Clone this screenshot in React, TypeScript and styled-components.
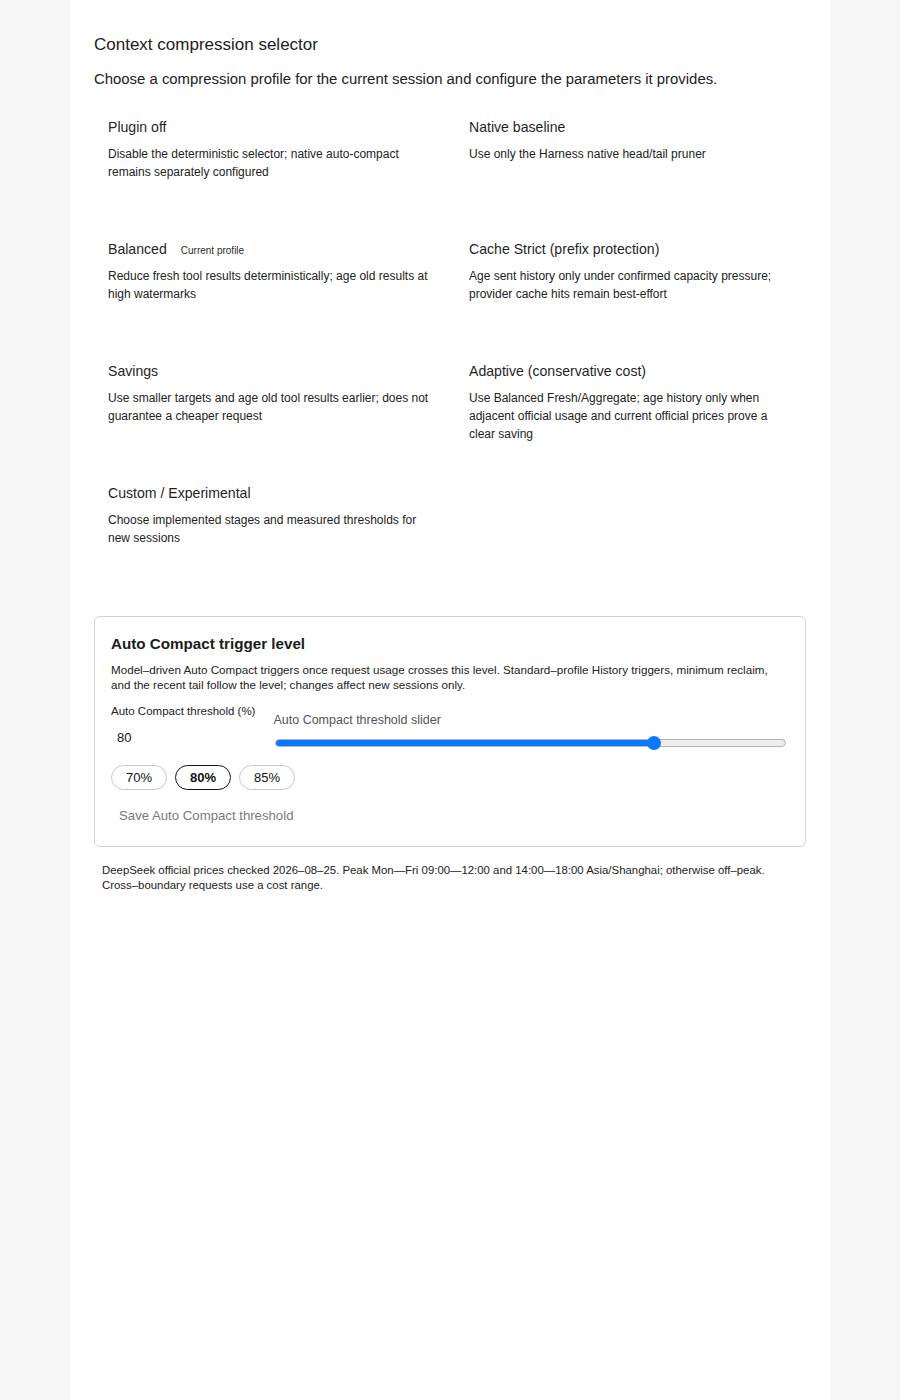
import React, { useState } from "react";
import styled, { createGlobalStyle } from "styled-components";

const Global = createGlobalStyle`
  html, body { margin: 0; padding: 0; background: #f6f6f6; }
  body { font-family: "Liberation Sans", Arial, sans-serif; color: #1f1f1f; }
  * { box-sizing: border-box; }
`;

const Page = styled.div`
  width: 760px;
  min-height: 1400px;
  margin: 0 auto;
  background: #ffffff;
  padding: 34px 24px 24px;
`;

const Title = styled.h2`
  margin: 0;
  font-size: 17px;
  font-weight: 500;
  line-height: 22px;
  color: #1c1c1c;
`;

const Lead = styled.p`
  margin: 12px 0 0;
  font-size: 14.9px;
  line-height: 22px;
  color: #222;
`;

const ProfileGrid = styled.div`
  display: grid;
  grid-template-columns: 1fr 1fr;
  column-gap: 10px;
  row-gap: 10px;
  margin-top: 13px;
`;

const ProfileCell = styled.div`
  padding: 14px;
  min-height: 112px;
`;

const ProfileHead = styled.div`
  display: flex;
  align-items: baseline;
  gap: 14px;
`;

const ProfileName = styled.div`
  font-size: 14.1px;
  line-height: 20px;
  color: #1f1f1f;
`;

const Badge = styled.span`
  font-size: 10px;
  color: #2a2a2a;
`;

const ProfileDesc = styled.div`
  margin-top: 8px;
  font-size: 12px;
  line-height: 18px;
  color: #222;
`;

const Card = styled.section`
  margin-top: 35px;
  border: 1px solid #d3d3d3;
  border-radius: 6px;
  padding: 16px 16px 19px;
`;

const CardTitle = styled.h3`
  margin: 0;
  font-size: 15.2px;
  font-weight: 600;
  line-height: 22px;
  color: #1c1c1c;
`;

const CardDesc = styled.p`
  margin: 7px 0 0;
  padding-right: 10px;
  font-size: 11.65px;
  line-height: 15px;
  color: #222;
`;

const ThresholdRow = styled.div`
  display: flex;
  align-items: flex-start;
  gap: 18px;
  margin-top: 12px;
`;

const Field = styled.label`
  display: flex;
  flex-direction: column;
  font-size: 11.5px;
  line-height: 14px;
  color: #222;
`;

const NumberInput = styled.input`
  border: none;
  outline: none;
  background: transparent;
  font-family: inherit;
  font-size: 13px;
  color: #111;
  width: 140px;
  padding: 0 6px;
  margin-top: 10px;
  height: 18px;
`;

const SliderField = styled.label`
  flex: 1;
  display: flex;
  flex-direction: column;
  padding-top: 8px;
  font-size: 12.5px;
  line-height: 16px;
  color: #555;
`;

const Range = styled.input`
  -webkit-appearance: none;
  appearance: none;
  width: calc(100% - 5px);
  margin: 8px 3px 0 2px;
  height: 14px;
  background: transparent;
  &::-webkit-slider-runnable-track {
    height: 8px;
    border-radius: 4px;
    border: 1px solid #b5b5b5;
    background: linear-gradient(
      to right,
      #0a78ff 0%,
      #0a78ff var(--fill),
      #ececec var(--fill),
      #ececec 100%
    );
  }
  &::-webkit-slider-thumb {
    -webkit-appearance: none;
    appearance: none;
    width: 14px;
    height: 14px;
    border-radius: 50%;
    background: #0a78ff;
    border: none;
    margin-top: -4px;
  }
`;

const Presets = styled.div`
  display: flex;
  gap: 8px;
  margin-top: 15px;
`;

const Pill = styled.button<{ $active?: boolean }>`
  font-family: inherit;
  font-size: 13px;
  height: 25px;
  min-width: 55px;
  padding: 0 14px;
  border-radius: 13px;
  background: #fff;
  color: #111;
  border: 1px solid ${(p) => (p.$active ? "#111" : "#c8c8c8")};
  font-weight: ${(p) => (p.$active ? 700 : 400)};
  cursor: pointer;
`;

const SaveButton = styled.button`
  margin-top: 14px;
  border: none;
  background: transparent;
  font-family: inherit;
  font-size: 13.2px;
  color: #7a7a7a;
  padding: 4px 8px;
  text-align: left;
`;

const Footnote = styled.p`
  margin: 16px 0 0;
  padding: 0 8px;
  font-size: 11.4px;
  line-height: 15px;
  color: #222;
`;

const profiles = [
  {
    name: "Plugin off",
    desc: "Disable the deterministic selector; native auto-compact remains separately configured",
  },
  { name: "Native baseline", desc: "Use only the Harness native head/tail pruner" },
  {
    name: "Balanced",
    current: true,
    desc: "Reduce fresh tool results deterministically; age old results at high watermarks",
  },
  {
    name: "Cache Strict (prefix protection)",
    desc: "Age sent history only under confirmed capacity pressure; provider cache hits remain best-effort",
  },
  {
    name: "Savings",
    desc: "Use smaller targets and age old tool results earlier; does not guarantee a cheaper request",
  },
  {
    name: "Adaptive (conservative cost)",
    desc: "Use Balanced Fresh/Aggregate; age history only when adjacent official usage and current official prices prove a clear saving",
  },
  {
    name: "Custom / Experimental",
    desc: "Choose implemented stages and measured thresholds for new sessions",
  },
];

export default function App() {
  const [value, setValue] = useState(80);
  const min = 50;
  const max = 90;
  const fill = ((value - min) / (max - min)) * 100;
  return (
    <>
      <Global />
      <Page>
        <Title>Context compression selector</Title>
        <Lead>
          Choose a compression profile for the current session and configure the parameters it
          provides.
        </Lead>
        <ProfileGrid>
          {profiles.map((p) => (
            <ProfileCell key={p.name}>
              <ProfileHead>
                <ProfileName>{p.name}</ProfileName>
                {p.current && <Badge>Current profile</Badge>}
              </ProfileHead>
              <ProfileDesc>{p.desc}</ProfileDesc>
            </ProfileCell>
          ))}
        </ProfileGrid>
        <Card>
          <CardTitle>Auto Compact trigger level</CardTitle>
          <CardDesc>
            Model–driven Auto Compact triggers once request usage crosses this level.
            Standard–profile History triggers, minimum reclaim, and the recent tail follow the
            level; changes affect new sessions only.
          </CardDesc>
          <ThresholdRow>
            <Field>
              Auto Compact threshold (%)
              <NumberInput
                type="text"
                value={value}
                onChange={(e) => setValue(Number(e.target.value) || 0)}
              />
            </Field>
            <SliderField>
              Auto Compact threshold slider
              <Range
                type="range"
                min={min}
                max={max}
                value={value}
                style={{ ["--fill" as string]: `${fill}%` } as React.CSSProperties}
                onChange={(e) => setValue(Number(e.target.value))}
              />
            </SliderField>
          </ThresholdRow>
          <Presets>
            {[70, 80, 85].map((v) => (
              <Pill key={v} $active={v === value} onClick={() => setValue(v)}>
                {v}%
              </Pill>
            ))}
          </Presets>
          <SaveButton>Save Auto Compact threshold</SaveButton>
        </Card>
        <Footnote>
          DeepSeek official prices checked 2026–08–25. Peak Mon—Fri 09:00—12:00 and 14:00—18:00
          Asia/Shanghai; otherwise off–peak. Cross–boundary requests use a cost range.
        </Footnote>
      </Page>
    </>
  );
}
